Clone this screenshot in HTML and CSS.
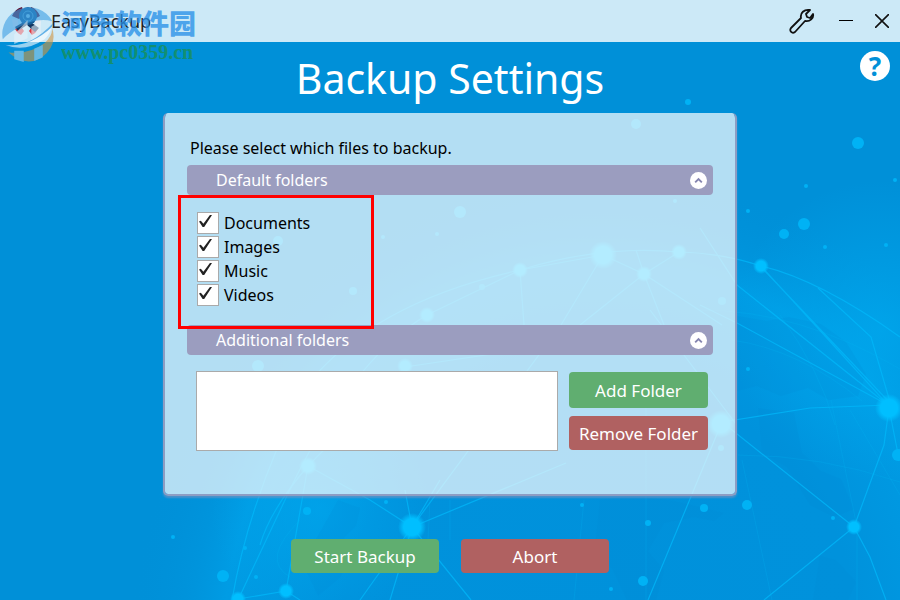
FILE: index.html
```html
<!DOCTYPE html>
<html lang="en">
<head>
<meta charset="utf-8">
<meta name="viewport" content="width=device-width, initial-scale=1">
<title>EasyBackup</title>
<link rel="stylesheet" href="styles.css">
</head>
<body>
<div class="app">
  <svg class="backdrop" viewBox="0 0 900 600" preserveAspectRatio="xMidYMid slice" aria-hidden="true">
    <defs>
      <radialGradient id="globe" cx="600" cy="640" r="470" gradientUnits="userSpaceOnUse">
        <stop offset="0" stop-color="#0091db"/>
        <stop offset=".55" stop-color="#0092dc"/>
        <stop offset=".8" stop-color="#009ce4"/>
        <stop offset=".87" stop-color="#0096de" stop-opacity=".7"/>
        <stop offset="1" stop-color="#0090d8" stop-opacity="0"/>
      </radialGradient>
      <radialGradient id="rim" cx="880" cy="330" r="150" gradientUnits="userSpaceOnUse">
        <stop offset="0" stop-color="#00aff4" stop-opacity=".6"/>
        <stop offset="1" stop-color="#00aff4" stop-opacity="0"/>
      </radialGradient>
      <radialGradient id="rim2" cx="320" cy="510" r="110" gradientUnits="userSpaceOnUse">
        <stop offset="0" stop-color="#00aff4" stop-opacity=".45"/>
        <stop offset="1" stop-color="#00aff4" stop-opacity="0"/>
      </radialGradient>
      <radialGradient id="node">
        <stop offset="0" stop-color="#00bfff"/>
        <stop offset=".6" stop-color="#00bfff"/>
        <stop offset="1" stop-color="#00bfff" stop-opacity="0"/>
      </radialGradient>
    </defs>
    <rect width="900" height="600" fill="#0090d8"/>
    <circle cx="600" cy="640" r="470" fill="url(#globe)"/>
    <rect x="730" y="180" width="170" height="300" fill="url(#rim)"/>
    <rect x="190" y="380" width="260" height="220" fill="url(#rim2)"/>
    <g fill="#0087d2" opacity=".16">
      <path d="M737 316l30 5 22-4 32 7 25 18 20 32-8 22-29 4-21-12-27 8-24-10-20 5z"/>
      <path d="M758 408l36 5 8 40 19 18 20 8 13 30-20 8-24-12-23-38-25-14z"/>
      <path d="M600 500l32-4 42 5 50 12-10 8-20-4-30 6-16 28 16 20-8 29h-29l-14-30-18-22z"/>
      <path d="M338 500l22 8-4 18-12 12 6 20-10 20-22 18-16-34 18-30z"/>
      <path d="M820 556l16 4 20 22-8 18h-35z"/>
    </g>
    <g fill="none" stroke="#00b8fa" stroke-width="1.2" opacity=".75">
      <path d="M232 600Q250 495 307 385 374 302 520 270 600 245 679 252 722 253 761 266 820 280 900 337"/>
      <path d="M238 600L285 500Q350 360 427 315L520 270 603 255 644 274 679 252"/>
      <path d="M238 599L286 591 302 500 308 466 405 367M308 466L370 500 412 527 566 463M308 466Q270 510 260 545M412 527L405 490M412 527L440 480M412 527L360 600M412 527L390 600M412 527L471 600M286 591L300 600"/>
      <path d="M520 270L524 325M603 255L561 325 412 527M644 274L580 325M644 274L664 325M636 250L644 274 722 325M405 367L520 350"/>
      <path d="M700 228L737 285 888 405M700 305L737 323 888 405M761 266L888 405 810 408 722 422M763 269L892 405"/>
      <path d="M818 288L871 337 890 402M722 422L854 527 764 600M854 527L884 445 889 408 898 454M854 527L870 557 886 600M722 422L648 600M650 310L736 424"/>
    </g>
    <g fill="none" stroke="#00b4f4" stroke-width="1" opacity=".23">
      <path d="M700 310Q800 310 900 369M732 340Q800 350 862 401M780 315Q820 370 835 425M738 455Q820 455 900 482M742 460L772 600M831 400L857 527V600M850 410L900 495M646 400V600M430 500L428 540M300 520Q260 560 290 577M450 500L450 540M584 500L574 600"/>
    </g>
    <g fill="#00b2f5">
      <circle cx="858" cy="143" r="6"/><circle cx="804" cy="224" r="6"/><circle cx="784" cy="234" r="5"/>
      <circle cx="806" cy="186" r="2"/><circle cx="895" cy="180" r="2"/><circle cx="748" cy="211" r="2"/>
      <circle cx="825" cy="247" r="2"/><circle cx="886" cy="245" r="2"/><circle cx="748" cy="369" r="2"/>
      <circle cx="688" cy="102" r="3"/><circle cx="636" cy="124" r="5"/><circle cx="460" cy="212" r="6"/>
      <circle cx="675" cy="201" r="2"/><circle cx="722" cy="301" r="4"/><circle cx="278" cy="241" r="5"/>
      <circle cx="383" cy="237" r="2"/><circle cx="437" cy="234" r="2"/><circle cx="353" cy="291" r="4"/>
      <circle cx="482" cy="287" r="3"/><circle cx="258" cy="366" r="6"/><circle cx="721" cy="448" r="3"/>
      <circle cx="704" cy="508" r="4"/><circle cx="747" cy="505" r="5"/><circle cx="648" cy="523" r="3"/>
      <circle cx="582" cy="505" r="2"/><circle cx="643" cy="581" r="5"/><circle cx="611" cy="589" r="2"/>
      <circle cx="833" cy="518" r="2"/><circle cx="898" cy="455" r="6"/><circle cx="173" cy="537" r="2"/>
      <circle cx="223" cy="576" r="6"/><circle cx="256" cy="577" r="2"/><circle cx="245" cy="548" r="2"/>
      <circle cx="307" cy="511" r="4"/><circle cx="386" cy="502" r="2"/>
    </g>
    <g fill="url(#node)">
      <circle cx="761" cy="266" r="8"/><circle cx="889" cy="408" r="14"/><circle cx="854" cy="527" r="8"/>
      <circle cx="412" cy="527" r="14"/><circle cx="286" cy="591" r="8"/><circle cx="238" cy="599" r="8"/>
      <circle cx="308" cy="466" r="9"/><circle cx="603" cy="255" r="14"/><circle cx="520" cy="270" r="8"/>
      <circle cx="644" cy="274" r="8"/><circle cx="679" cy="252" r="8"/><circle cx="427" cy="315" r="8"/>
      <circle cx="405" cy="366" r="8"/><circle cx="721" cy="424" r="14"/>
    </g>
  </svg>

  <header class="titlebar">
    <svg class="app-icon" viewBox="0 0 32 32" aria-hidden="true">
      <path d="M1 11Q4 4 11 2L13 8 8 14zM29 11Q26 4 20 2L18 8 23 14z" fill="#5e1233"/>
      <path d="M1 14L7 15V21L2 22zM30 14L24 15V21L29 22z" fill="#e5e9f2"/>
      <path d="M4 24L9 20 13 26 10 30Q6 28 4 24zM27 24L22 20 18 26 21 30Q25 28 27 24z" fill="#e0353c"/>
      <path d="M10 13H22L21 18 28 23 24 27 16 20 7 26 4 22 11 18z" fill="#143560"/>
      <circle cx="17" cy="11" r="9" fill="#155c97"/>
      <circle cx="17" cy="11" r="5" fill="none" stroke="#4c9dca"/>
      <circle cx="17" cy="11" r="2" fill="#7cc0e2"/>
    </svg>
    <span class="app-name">EasyBackup</span>
    <div class="window-tools">
      <button class="tool" type="button" aria-label="Settings">
        <svg width="28" height="26" viewBox="0 0 28 26" fill="none" stroke="#111" stroke-width="1.8" stroke-linejoin="round"><path d="M12 10C11 5 15 1 21 2L17 6 18 9 21 10 24 6C25 10 21 14 16 13L6 24C3 26 0 23 2 20z"/></svg>
      </button>
      <button class="tool" type="button" aria-label="Minimize">
        <svg width="14" height="16" viewBox="0 0 14 16"><path d="M0 7.5H14" stroke="#000"/></svg>
      </button>
      <button class="tool" type="button" aria-label="Close">
        <svg width="14" height="14" viewBox="0 0 14 14" stroke="#111" stroke-width="1.6"><path d="M0 0L14 14M14 0L0 14"/></svg>
      </button>
    </div>
  </header>

  <div class="watermark">
    <svg class="mark" viewBox="0 0 58 62" aria-hidden="true">
      <path d="M2 37A28 28 0 0 1 54 18Q37 14 20 24 7 31 2 37z" fill="#3c9fe4"/>
      <path d="M53 23Q61 43 42 57 25 66 8 51 31 53 46 41 56 32 53 23z" fill="#d2953f"/>
      <path d="M14 32L28 17V36L14 42zM32 24L42 18V34L32 38z" fill="#e6f2fa"/>
      <path d="M3 42Q27 49 55 20 52 32 39 41 18 54 3 42z" fill="#1c8ddd"/>
      <path d="M5 43Q30 46 54 24 51 32 46 37 25 51 5 43z" fill="#fff"/>
      <path d="M14 49H24V61L14 58zM35 47L44 43V56L35 60z" fill="#a9d5ee"/>
    </svg>
    <div class="mark-text">
      <span class="mark-name" lang="zh">河东软件园</span>
      <span class="mark-site">www.pc0359.cn</span>
    </div>
  </div>

  <main class="content">
    <div class="heading">
      <h1>Backup Settings</h1>
      <button class="help" type="button" aria-label="Help">?</button>
    </div>

    <section class="panel">
      <p class="intro">Please select which files to backup.</p>
      <section class="group">
        <h2 class="bar">Default folders
          <button class="fold" type="button" aria-label="Collapse default folders"><svg viewBox="0 0 18 18"><path d="M5.500 11L9 7.500 12.500 11" fill="none" stroke="#8585b0" stroke-width="2"/></svg></button>
        </h2>
        <div class="choices">
          <label class="choice"><input type="checkbox" checked>Documents</label>
          <label class="choice"><input type="checkbox" checked>Images</label>
          <label class="choice"><input type="checkbox" checked>Music</label>
          <label class="choice"><input type="checkbox" checked>Videos</label>
        </div>
        <div class="highlight"></div>
      </section>
      <section class="group">
        <h2 class="bar">Additional folders
          <button class="fold" type="button" aria-label="Collapse additional folders"><svg viewBox="0 0 18 18"><path d="M5.500 11L9 7.500 12.500 11" fill="none" stroke="#8585b0" stroke-width="2"/></svg></button>
        </h2>
        <div class="extra">
          <textarea class="folder-list" aria-label="Additional folders"></textarea>
          <div class="extra-actions">
            <button class="btn add" type="button">Add Folder</button>
            <button class="btn danger" type="button">Remove Folder</button>
          </div>
        </div>
      </section>
    </section>

    <div class="actions">
      <button class="btn add" type="button">Start Backup</button>
      <button class="btn danger" type="button">Abort</button>
    </div>
  </main>
</div>
</body>
</html>
```
FILE: styles.css
```css
* { box-sizing: border-box; }

body {
  margin: 0;
  font-family: "Noto Sans", "Open Sans", sans-serif;
  font-size: 16px;
  color: #000;
}

h1, h2, p { margin: 0; font-weight: 400; }

button { font: inherit; border: 0; padding: 0; cursor: pointer; }

svg { display: block; }

.app {
  position: relative;
  min-height: 100vh;
  overflow: hidden;
  background: #0090d8;
}

.backdrop {
  position: absolute;
  inset: 0;
  width: 100%;
  height: 100%;
}

.titlebar {
  position: relative;
  display: flex;
  align-items: center;
  gap: 8px;
  height: 42px;
  padding: 0 11px;
  background: #cce9f7;
}

.app-icon { width: 32px; height: 32px; }

.app-name { font-size: 18px; color: #222; }

.window-tools {
  display: flex;
  align-items: center;
  gap: 22px;
  margin-left: auto;
}

.tool {
  display: grid;
  place-items: center;
  background: none;
}

.watermark {
  position: absolute;
  top: 4px;
  left: 0;
  display: flex;
  gap: 4px;
  pointer-events: none;
}

.mark { width: 57px; height: 59px; opacity: .6; }

.mark-text { display: flex; flex-direction: column; opacity: .76; }

.mark-name {
  font: 900 27px/38px "Noto Sans CJK SC", sans-serif;
  color: #268fe8;
}

.mark-site {
  font: bold 20px/20px "Liberation Serif", serif;
  color: #198f51;
}

.content {
  position: relative;
  display: flex;
  flex-direction: column;
  align-items: center;
  padding: 0 10px 24px;
}

.heading {
  display: grid;
  grid-template-columns: 1fr auto 1fr;
  width: 100%;
  height: 71px;
}

h1 {
  grid-column: 2;
  font-size: 41px;
  line-height: 72px;
  color: #fff;
}

.help {
  justify-self: end;
  width: 30px;
  height: 30px;
  margin-top: 9px;
  border-radius: 50%;
  background: #fff;
  color: #0090d8;
  font-size: 26px;
  font-weight: 700;
  line-height: 30px;
}

.panel {
  width: 100%;
  max-width: 574px;
  padding: 24px 22px 43px;
  border: solid #8d9dc3;
  border-width: 0 2px 2px;
  border-radius: 5px;
  background: rgba(255, 255, 255, .7);
  background-clip: padding-box;
  box-shadow: 0 2px 2px rgba(125, 145, 190, .6);
}

.intro {
  padding: 0 3px 6px;
  font-size: 16px;
  line-height: 22px;
}

.group { position: relative; }

.bar {
  display: flex;
  align-items: center;
  justify-content: space-between;
  height: 30px;
  padding: 0 6px 0 29px;
  border-radius: 4px;
  background: #9b9dbf;
  color: #fff;
  font-size: 16px;
}

.fold {
  width: 17px;
  height: 17px;
  border-radius: 50%;
  background: #fff;
}

.choices {
  display: flex;
  flex-direction: column;
  align-items: flex-start;
  padding: 16px 10px 18px;
}

.choice {
  display: flex;
  align-items: center;
  gap: 5px;
  height: 24px;
}

.choice input {
  appearance: none;
  width: 22px;
  height: 22px;
  margin: 0;
  border: 1px solid #aaa;
  background: #fff;
}

.choice input:checked::before {
  content: "";
  display: block;
  width: 13px;
  height: 12px;
  margin: 2px 1px;
  background: #222;
  clip-path: polygon(0 55%, 14% 48%, 34% 72%, 84% 0, 100% 0, 40% 100%, 28% 100%);
}

.highlight {
  position: absolute;
  top: 30px;
  left: -9px;
  width: 196px;
  height: 134px;
  border: 3px solid #f00;
  z-index: 1;
  pointer-events: none;
}

.extra {
  display: flex;
  gap: 11px;
  padding: 16px 5px 0 9px;
}

.folder-list {
  flex: 1;
  min-width: 0;
  height: 80px;
  border: 1px solid #aaa;
  background: #fff;
  resize: none;
}

.extra-actions {
  display: flex;
  flex-direction: column;
  gap: 8px;
  width: 139px;
  padding-top: 1px;
}

.btn {
  height: 34px;
  border-radius: 4px;
  color: #fff;
  font-size: 17px;
}

.extra-actions .add { height: 36px; }

.add { background: #60ae70; }

.danger { background: #b06161; }

.actions {
  display: flex;
  gap: 22px;
  margin-top: 43px;
}

.actions .btn { width: 148px; }
```
